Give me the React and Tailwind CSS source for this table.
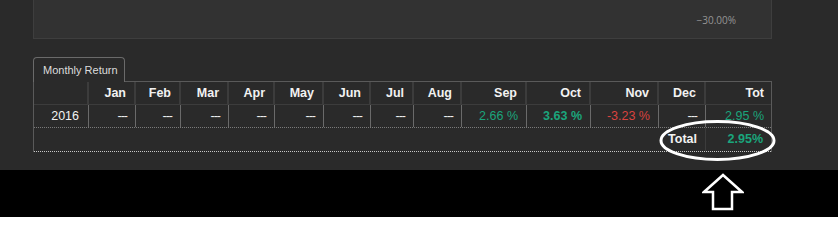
import React from 'react';

const months = ['Jan', 'Feb', 'Mar', 'Apr', 'May', 'Jun', 'Jul', 'Aug', 'Sep', 'Oct', 'Nov', 'Dec', 'Tot'];

const dash = { v: '---', c: 'text-[#f0f0f0] tracking-[-1px]' };

const values = [
    dash, dash, dash, dash, dash, dash, dash, dash,
    { v: '2.66 %', c: 'text-[#1aa57c]' },
    { v: '3.63 %', c: 'text-[#1aa57c] font-bold' },
    { v: '-3.23 %', c: 'text-[#d8433f]' },
    dash,
    { v: '2.95 %', c: 'text-[#1aa57c]' },
];

const grid = 'grid grid-cols-[55px_47px_45px_48px_46px_49px_47px_43px_48px_65px_64px_68px_47px_66px]';

const App = () => {
    return (
        <div className="w-[838px] h-[250px] bg-white font-['Liberation_Sans',Arial,sans-serif] overflow-hidden">
            <div className="relative h-[170px] bg-[#2a2a2a]">
                {/* chart panel (cut off at top) */}
                <div className="ml-[33px] w-[739px] h-[39px] bg-[#323232] border-x border-b border-[#3e3e3e] flex items-center justify-end pr-[35px] pt-[3px]">
                    <span className="text-[10px] text-[#959595] font-['Open_Sans',sans-serif]">−30.00%</span>
                </div>

                {/* tab */}
                <div className="ml-[33px] mt-[18px] w-[92px] h-[25px] -mb-px relative z-10 bg-[#2a2a2a] border border-b-0 border-[#6a6a6a] rounded-t-[4px] flex items-center pl-[9px]">
                    <span className="text-[11px] text-[#dcdcdc]">Monthly Return</span>
                </div>

                {/* table */}
                <div className="ml-[33px] w-[739px] border-l border-r border-t border-[#5a5a5a]">
                    <div className={`${grid} h-[23px] border-b border-[#3c3c3c]`}>
                        <div className="border-r-2 border-[#3c3c3c]"></div>
                        {months.map((m) => (
                            <div key={m} className="border-r-2 border-[#3c3c3c] last:border-r-0 flex items-center justify-end pr-[8px] text-[12.5px] font-bold text-[#f2f2f2]">
                                {m}
                            </div>
                        ))}
                    </div>
                    <div className={`${grid} h-[23px] border-b border-dotted border-[#7a7a7a]`}>
                        <div className="border-r border-[#6a6a6a] flex items-center justify-end pr-[9px] text-[12.5px] text-[#f2f2f2]">2016</div>
                        {values.map((d, i) => (
                            <div key={i} className={`border-r border-[#6a6a6a] last:border-r-0 flex items-center justify-end pr-[8px] text-[12.5px] ${d.c}`}>
                                {d.v}
                            </div>
                        ))}
                    </div>
                    <div className="flex h-[24px] border-b border-dotted border-[#c8c8c8]">
                        <div className="w-[672px] border-r border-[#3c3c3c] flex items-center justify-end pr-[8px] text-[12.5px] font-bold text-[#f2f2f2]">Total</div>
                        <div className="flex-1 flex items-center justify-end pr-[8px] text-[12.5px] font-bold text-[#1aa57c]">2.95%</div>
                    </div>
                </div>

                {/* highlight ellipse */}
                <svg className="absolute left-[658px] top-[119px]" width="120" height="44" viewBox="0 0 120 44">
                    <ellipse cx="59.5" cy="21.5" rx="56.5" ry="19" fill="none" stroke="#ffffff" strokeWidth="3" />
                </svg>
            </div>

            <div className="h-[47px] bg-black pl-[702px] pt-[3px]">
                <svg width="42" height="40" viewBox="0 0 42 40">
                    <polygon points="21,2 40,19 30,19 30,36 11,36 11,19 2,19" fill="none" stroke="#ffffff" strokeWidth="2.5" strokeLinejoin="miter" />
                </svg>
            </div>
        </div>
    );
};

export default App;
